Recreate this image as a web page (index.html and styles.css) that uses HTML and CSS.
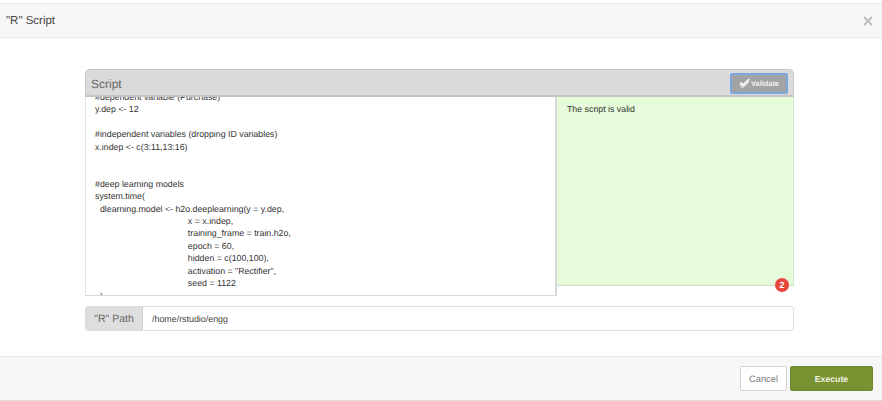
FILE: index.html
```html
<!DOCTYPE html>
<html lang="en">
<head>
<meta charset="utf-8">
<title>"R" Script</title>
<link rel="stylesheet" href="styles.css">
</head>
<body>
<div class="modal">
  <header class="modal-head">
    <h1>"R" Script</h1>
    <svg class="close" viewBox="0 0 10 10" aria-hidden="true"><path d="M1 1L9 9M9 1L1 9"/></svg>
  </header>
  <main class="modal-body">
    <section class="panel">
      <div class="panel-head">
        <span class="panel-title">Script</span>
        <button class="validate" type="button">
          <svg viewBox="0 0 14 13" aria-hidden="true"><path class="c2" d="M1 8L4.5 11.5L12.5 4.5"/><path class="c1" d="M1.5 5L5 8.5L13 1"/></svg>
          Validate
        </button>
      </div>
      <div class="panel-main">
        <div class="editor"><pre class="code">#dependent variable (Purchase)
y.dep &lt;- 12

#independent variables (dropping ID variables)
x.indep &lt;- c(3:11,13:16)


#deep learning models
system.time(
  dlearning.model &lt;- h2o.deeplearning(y = y.dep,
                                      x = x.indep,
                                      training_frame = train.h2o,
                                      epoch = 60,
                                      hidden = c(100,100),
                                      activation = "Rectifier",
                                      seed = 1122
  )
)</pre></div>
        <div class="result">
          The script is valid
          <span class="badge">2</span>
        </div>
      </div>
    </section>
    <div class="path">
      <span class="path-label">"R" Path</span>
      <span class="path-value">/home/rstudio/engg</span>
    </div>
  </main>
  <footer class="modal-foot">
    <button class="btn cancel" type="button">Cancel</button>
    <button class="btn execute" type="button">Execute</button>
  </footer>
</div>
</body>
</html>
```
FILE: styles.css
```css
* { box-sizing: border-box; }
html, body { margin: 0; height: 100%; }
body { background: #fff; font-family: "Liberation Sans", Arial, sans-serif; color: #333; overflow: hidden; text-rendering: geometricPrecision; }
.modal { width: 882px; height: 401px; display: flex; flex-direction: column; padding-top: 3px; }
.modal-head {
  height: 35px; flex: none; display: flex; align-items: center; justify-content: space-between;
  padding: 0 9px 0 6px; background: #f7f7f7; border-top: 1px solid #e9e9e9; border-bottom: 1px solid #e9e9e9;
}
.modal-head h1 { margin: 0; font-size: 11.5px; font-weight: 400; color: #444; }
.close { width: 10px; height: 10px; }
.close path { stroke: #bdbdbd; stroke-width: 2; fill: none; }
.modal-body { flex: 1; padding: 31px 88px 0 85px; }
.panel { position: relative; }
.panel-head {
  height: 28px; display: flex; align-items: center; justify-content: space-between;
  padding: 2px 5px 0 5px; background: #dadada; border: 1px solid #c9c9c9; border-bottom: 2px solid #c4c4c4;
  border-radius: 5px 5px 0 0;
}
.panel-title { font-size: 12px; color: #666; }
.validate {
  width: 58px; height: 21px; padding: 0; display: flex; align-items: center; justify-content: center; gap: 1px;
  background: #a3a3a3; border: 2px solid #7ba6de; border-radius: 2px; color: #f2f2f2;
  font: 700 7.4px "Liberation Sans", Arial, sans-serif; text-rendering: geometricPrecision;
}
.validate svg { width: 11px; height: 11px; }
.validate path { fill: none; stroke-width: 2; }
.validate .c1 { stroke: #fff; }
.validate .c2 { stroke: #dcdcdc; }
.panel-main { display: flex; align-items: flex-start; }
.editor {
  width: 472px; height: 199px; flex: none; overflow: hidden; background: #fff;
  border-left: 1px solid #e4e4e4; border-right: 2px solid #d8d8d8; border-bottom: 1px solid #d8d8d8;
  padding-left: 9px;
}
.code { margin: -6px 0 0; font: 8.8px/12.4px "Liberation Sans", Arial, sans-serif; color: #333; white-space: pre; }
.result {
  position: relative; flex: 1; height: 189px; padding: 7px 10px; background: #e5fbd9;
  border-right: 1px solid #d5e6cb; border-bottom: 1px solid #cfdcc8; font-size: 8.8px; color: #333;
}
.badge {
  position: absolute; right: 4px; bottom: -7px; width: 14px; height: 14px; border-radius: 50%;
  background: #e8473f; color: #fff; font-size: 9px; font-weight: 700; line-height: 14px; text-align: center;
}
.path {
  height: 25px; margin-top: 10px; display: flex; border: 1px solid #dcdcdc; border-radius: 3px; overflow: hidden;
}
.path-label {
  width: 57px; flex: none; display: flex; align-items: center; justify-content: center;
  background: #dedede; border-right: 1px solid #d0d0d0; font-size: 10.5px; color: #666;
}
.path-value { flex: 1; display: flex; align-items: center; padding-left: 9px; font-size: 8.9px; color: #444; }
.modal-foot {
  height: 45px; flex: none; display: flex; justify-content: flex-end; align-items: center; gap: 3px;
  padding: 0 9px 0 0; background: #f7f7f7; border-top: 1px solid #e5e5e5; border-bottom: 1px solid #dcdcdc;
}
.btn { height: 25px; padding: 0; border-radius: 2px; font: 9.3px "Liberation Sans", Arial, sans-serif; text-rendering: geometricPrecision; }
.cancel { width: 47px; background: #fff; border: 1px solid #d4d4d4; color: #777; }
.execute { width: 83px; background: #789232; border: 1px solid #6f8a2e; color: #f0f4e4; font-size: 8.7px; font-weight: 700; }
```
